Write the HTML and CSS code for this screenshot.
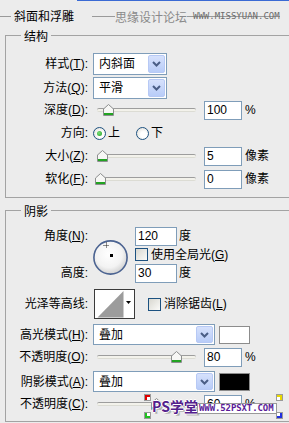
FILE: index.html
```html
<!DOCTYPE html>
<html lang="zh-CN">
<head>
<meta charset="utf-8">
<title>斜面和浮雕</title>
<link rel="stylesheet" href="styles.css">
</head>
<body>
<div class="topline"></div>
<header class="head">
  <span class="head-line left"></span>
  <h1 class="head-title">斜面和浮雕</h1>
  <span class="head-line right"></span>
  <span class="wm-top"><span class="wm-cn">思缘设计论坛</span><span class="wm-url">WWW.MISSYUAN.COM</span></span>
</header>

<section class="group g1">
  <h2 class="group-title">结构</h2>
  <div class="row r22 first">
    <span class="lbl">样式(<u>T</u>):</span>
    <div class="select short"><span class="sel-val">内斜面</span><span class="sel-btn"><svg width="9" height="6" viewBox="0 0 9 6"><path d="M1 1l3.5 3.5L8 1" fill="none" stroke="#4a5e86" stroke-width="2"/></svg></span></div>
  </div>
  <div class="row r22 gap2">
    <span class="lbl">方法(<u>Q</u>):</span>
    <div class="select short"><span class="sel-val">平滑</span><span class="sel-btn"><svg width="9" height="6" viewBox="0 0 9 6"><path d="M1 1l3.5 3.5L8 1" fill="none" stroke="#4a5e86" stroke-width="2"/></svg></span></div>
  </div>
  <div class="row r20 gap1">
    <span class="lbl">深度(<u>D</u>):</span>
    <div class="slider"><div class="track"></div><svg class="thumb" style="left:6px" width="11" height="12" viewBox="0 0 11 12"><path d="M5.5 0.5L10.5 5V11.5H0.5V5Z" fill="#f7f7f5" stroke="#8c8e8e"/><rect x="1" y="9" width="9" height="2" fill="#22a322"/></svg></div>
    <span class="num">100</span><span class="unit">%</span>
  </div>
  <div class="row r20 gap3">
    <span class="lbl">方向:</span>
    <span class="radio checked"></span><span class="opt">上</span>
    <span class="radio second"></span><span class="opt">下</span>
  </div>
  <div class="row r20 gap3">
    <span class="lbl">大小(<u>Z</u>):</span>
    <div class="slider"><div class="track"></div><svg class="thumb" style="left:0px" width="11" height="12" viewBox="0 0 11 12"><path d="M5.5 0.5L10.5 5V11.5H0.5V5Z" fill="#f7f7f5" stroke="#8c8e8e"/><rect x="1" y="9" width="9" height="2" fill="#22a322"/></svg></div>
    <span class="num">5</span><span class="unit">像素</span>
  </div>
  <div class="row r20 gap3">
    <span class="lbl">软化(<u>F</u>):</span>
    <div class="slider"><div class="track"></div><svg class="thumb" style="left:-2px" width="11" height="12" viewBox="0 0 11 12"><path d="M5.5 0.5L10.5 5V11.5H0.5V5Z" fill="#f7f7f5" stroke="#8c8e8e"/><rect x="1" y="9" width="9" height="2" fill="#22a322"/></svg></div>
    <span class="num">0</span><span class="unit">像素</span>
  </div>
</section>

<section class="group g2">
  <h2 class="group-title">阴影</h2>
  <div class="angle">
    <span class="lbl a1">角度(<u>N</u>):</span>
    <div class="dial">
      <svg width="36" height="36" viewBox="0 0 36 36">
        <defs>
          <radialGradient id="dg" cx="45%" cy="40%" r="62%">
            <stop offset="0" stop-color="#ffffff"/>
            <stop offset="0.65" stop-color="#f3f3f3"/>
            <stop offset="1" stop-color="#cfcfcf"/>
          </radialGradient>
        </defs>
        <circle cx="17.5" cy="17.5" r="16.6" fill="url(#dg)" stroke="#4b6391" stroke-width="1.6"/>
        <path d="M13.5 2.5v6M10.5 5.5h6" stroke="#222" stroke-width="1" stroke-dasharray="1 1"/>
        <rect x="17" y="14" width="3" height="3" fill="#000"/>
      </svg>
    </div>
    <div class="ctl a1"><span class="num wide">120</span><span class="unit u2">度</span></div>
    <div class="ctl a2"><span class="check"></span><span class="chk-text">使用全局光(<u>G</u>)</span></div>
    <span class="lbl a3">高度:</span>
    <div class="ctl a3"><span class="num wide">30</span><span class="unit u2">度</span></div>
  </div>
  <div class="row r30 gap6">
    <span class="lbl">光泽等高线:</span>
    <svg class="contour" width="41" height="30" viewBox="0 0 41 30">
      <rect x="0.5" y="0.5" width="40" height="29" fill="#fff" stroke="#3a3a3a"/>
      <polygon points="3.5,28.5 29.5,2 29.5,28.5" fill="#9c9c9c"/>
      <polygon points="32,12 37,12 34.5,15" fill="#000"/>
    </svg>
    <span class="check c2"></span><span class="chk-text">消除锯齿(<u>L</u>)</span>
  </div>
  <div class="row r21 gap5">
    <span class="lbl">高光模式(<u>H</u>):</span>
    <div class="select long"><span class="sel-val">叠加</span><span class="sel-btn"><svg width="9" height="6" viewBox="0 0 9 6"><path d="M1 1l3.5 3.5L8 1" fill="none" stroke="#4a5e86" stroke-width="2"/></svg></span></div>
    <span class="swatch white"></span>
  </div>
  <div class="row r20 gap2">
    <span class="lbl">不透明度(<u>O</u>):</span>
    <div class="slider"><div class="track"></div><svg class="thumb" style="left:74px" width="11" height="12" viewBox="0 0 11 12"><path d="M5.5 0.5L10.5 5V11.5H0.5V5Z" fill="#f7f7f5" stroke="#8c8e8e"/><rect x="1" y="9" width="9" height="2" fill="#22a322"/></svg></div>
    <span class="num">80</span><span class="unit">%</span>
  </div>
  <div class="row r21 gap4">
    <span class="lbl">阴影模式(<u>A</u>):</span>
    <div class="select long"><span class="sel-val">叠加</span><span class="sel-btn"><svg width="9" height="6" viewBox="0 0 9 6"><path d="M1 1l3.5 3.5L8 1" fill="none" stroke="#4a5e86" stroke-width="2"/></svg></span></div>
    <span class="swatch black"></span>
  </div>
  <div class="row r20 gap2">
    <span class="lbl">不透明度(<u>C</u>):</span>
    <div class="slider"><div class="track"></div><svg class="thumb" style="left:54px" width="11" height="12" viewBox="0 0 11 12"><path d="M5.5 0.5L10.5 5V11.5H0.5V5Z" fill="#f7f7f5" stroke="#8c8e8e"/><rect x="1" y="9" width="9" height="2" fill="#22a322"/></svg></div>
    <span class="num">60</span><span class="unit">%</span>
  </div>
</section>

<div class="wm-bottom">
  <span class="corner tl"></span>
  <span class="corner tr"></span>
  <span class="corner bl"></span>
  <span class="corner br"></span>
  <span class="wm-ps">PS学堂</span>
  <span class="wm-site">WWW.52PSXT.COM</span>
</div>
</body>
</html>
```
FILE: styles.css
```css
* { box-sizing: border-box; }
html, body { margin: 0; padding: 0; }
body {
  width: 289px;
  height: 423px;
  overflow: hidden;
  position: relative;
  background: #ececec;
  color: #000;
  font: 12px/14px "Liberation Sans", "Noto Sans CJK SC", sans-serif;
}
u { text-decoration: underline; text-underline-offset: 1px; }

.topline { height: 1px; margin-left: 77px; background: #3a6ad4; }

.head {
  position: relative;
  display: flex;
  align-items: center;
  height: 17px;
  margin-top: 7px;
}
.head-line { height: 1px; background: #9a9a9a; }
.head-line.left { width: 11px; flex: none; }
.head-line.right { flex: 1; margin-right: 9px; }
.head-title {
  margin: 0 18px 0 3px;
  font-size: 12px;
  font-weight: normal;
  line-height: 14px;
}
.wm-top {
  position: absolute;
  left: 115px;
  top: 0;
  height: 17px;
  display: flex;
  align-items: center;
}
.wm-cn { background: #ececec; color: #8a8a8a; font-family: "Noto Sans CJK SC", sans-serif; }
.wm-url {
  margin-left: 6px;
  font: 9px/9px "DejaVu Sans Mono", monospace;
  color: #6c6c6c;
}

.group {
  margin-left: 5px;
  border: 1px solid #a3a3a3;
  border-right: 0;
}
.g1 { margin-top: 10px; padding-bottom: 8px; }
.g2 { margin-top: 12px; padding-bottom: 7px; }
.group-title {
  width: max-content;
  margin: -6px 0 0 15px;
  padding: 0 3px;
  background: #ececec;
  font-size: 12px;
  font-weight: normal;
  line-height: 14px;
}

.row { display: flex; align-items: center; }
.r20 { height: 20px; }
.r21 { height: 21px; }
.r22 { height: 22px; }
.r30 { height: 30px; }
.first { margin-top: 9px; }
.gap1 { margin-top: 1px; }
.gap2 { margin-top: 2px; }
.gap3 { margin-top: 3px; }
.gap4 { margin-top: 4px; }
.gap5 { margin-top: 5px; }
.gap6 { margin-top: 6px; }

.lbl { width: 82px; flex: none; text-align: right; white-space: nowrap; }

.select {
  display: flex;
  height: 100%;
  margin-left: 5px;
  padding: 1px;
  border: 1px solid #7f9db9;
  background: #fff;
  flex: none;
}
.select.short { width: 74px; }
.select.long { width: 122px; }
.sel-val { flex: 1; padding-left: 4px; display: flex; align-items: center; }
.sel-btn {
  width: 17px;
  display: flex;
  align-items: center;
  justify-content: center;
  border: 1px solid #b7c9f5;
  border-radius: 2px;
  background: linear-gradient(#d6e1fc, #b8ccf8);
}

.slider { position: relative; width: 99px; height: 12px; margin-left: 9px; flex: none; }
.track {
  margin-top: 4px;
  height: 4px;
  border-radius: 2px;
  border-top: 1px solid #9d9d9d;
  border-bottom: 1px solid #dcdcd4;
  background: #f3f2eb;
}
.thumb { position: absolute; top: 0; }

.num {
  width: 38px;
  height: 19px;
  margin-left: 8px;
  padding-left: 2px;
  border: 1px solid #7f9db9;
  background: #fff;
  line-height: 17px;
  flex: none;
}
.num.wide { width: 42px; margin-left: 0; }
.unit { margin-left: 3px; }
.unit.u2 { margin-left: 2px; }

.radio {
  width: 13px;
  height: 13px;
  margin-left: 5px;
  border: 1px solid #1c5180;
  border-radius: 50%;
  background: radial-gradient(circle at 60% 60%, #fff 30%, #dcdad2 100%);
  flex: none;
  display: flex;
  align-items: center;
  justify-content: center;
}
.radio.checked::after {
  content: "";
  width: 5px;
  height: 5px;
  border-radius: 50%;
  background: radial-gradient(circle at 40% 40%, #7be07b, #1f9c1f);
}
.radio.second { margin-left: 16px; }
.opt { margin-left: 2px; }

.check {
  width: 13px;
  height: 13px;
  border: 1px solid #1c5180;
  background: linear-gradient(135deg, #d8d7d0, #fbfbf9);
  flex: none;
}
.check.c2 { margin-left: 13px; }
.chk-text { margin-left: 3px; white-space: nowrap; }

.angle {
  display: grid;
  grid-template-columns: 82px 47px auto;
  grid-template-rows: 20px 17px 20px;
  margin-top: 7px;
}
.angle .lbl { display: flex; align-items: center; justify-content: flex-end; }
.a1 { grid-row: 1; }
.a2 { grid-row: 2; }
.a3 { grid-row: 3; }
.angle .lbl { grid-column: 1; }
.ctl { grid-column: 3; display: flex; align-items: center; }
.dial { grid-column: 2; grid-row: 1 / 4; margin: 14px 0 0 5px; width: 36px; height: 36px; }
.dial svg { display: block; }

.contour { margin-left: 6px; flex: none; display: block; }

.swatch { width: 31px; height: 18px; margin-left: 4px; border: 1px solid #8c8c8c; flex: none; }
.swatch.white { background: #fff; }
.swatch.black { background: #000; }

.wm-bottom {
  position: absolute;
  left: 145px;
  top: 395px;
  width: 137px;
  height: 23px;
}
.corner {
  position: absolute;
  width: 5px;
  height: 5px;
  background: #fff;
  box-shadow: 0 0 0 1px #9a9a9a;
}
.corner.tl { left: 0; top: 0; border-top: 2px solid #e00000; border-left: 2px solid #e00000; }
.corner.tr { right: 0; top: 0; border-top: 2px solid #e8d800; border-right: 2px solid #e8d800; }
.corner.bl { left: 0; bottom: 0; border-bottom: 2px solid #20c020; border-left: 2px solid #20c020; }
.corner.br { right: 0; bottom: 0; border-bottom: 2px solid #2030e0; border-right: 2px solid #2030e0; }
.wm-ps {
  position: absolute;
  left: 7px;
  top: 3px;
  font: bold 14px/16px "Noto Sans CJK SC", sans-serif;
  color: #52208c;
  text-shadow: 1px 0 #fff, -1px 0 #fff, 0 1px #fff, 0 -1px #fff, 1px 1px #999, 2px 2px #bbb;
}
.wm-site {
  position: absolute;
  left: 52px;
  top: 8px;
  width: 80px;
  height: 11px;
  padding-left: 1px;
  background: #fff;
  border: 1px solid #999;
  font: bold 9px/9px "DejaVu Sans Mono", monospace;
  letter-spacing: -0.1px;
  color: #5a1c98;
}
```
